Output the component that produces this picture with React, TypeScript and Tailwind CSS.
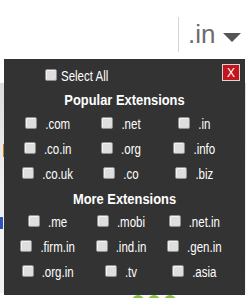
import React from "react";

const popular = [".com", ".net", ".in", ".co.in", ".org", ".info", ".co.uk", ".co", ".biz"];
const more = [".me", ".mobi", ".net.in", ".firm.in", ".ind.in", ".gen.in", ".org.in", ".tv", ".asia"];

// the screenshot uses a narrow face; Liberation Sans at a smaller size, stretched tall, stands in for it
const label = "inline-block text-[11.5px] leading-[16px] text-white scale-y-[1.26] translate-y-[1px]";
const heading = "inline-block text-white font-bold text-[12.9px] leading-[16px] scale-y-[1.17]";

function Box() {
  return (
    <input
      type="checkbox"
      className="appearance-none shrink-0 w-[12px] h-[12px] m-0 rounded-[2px] border border-[#8f8f8f] bg-[#dedede] shadow-[inset_1px_1px_0_#f4f4f4]"
    />
  );
}

function ExtGrid({ items }: { items: string[] }) {
  return (
    <div className="grid grid-cols-3 w-[220px] ml-[7px]">
      {items.map((ext) => (
        <label key={ext} className="flex items-center justify-center gap-[8px] h-[25px]">
          <Box />
          <span className={label}>{ext}</span>
        </label>
      ))}
    </div>
  );
}

export default function App() {
  return (
    <div className="relative w-[246px] h-[298px] bg-white overflow-hidden font-['Liberation_Sans',sans-serif]">
      <div className="flex items-start h-[59px] pl-[178px] pt-[17px]">
        <div className="w-px h-[35px] bg-[#d4d4d4]" />
        <span className="ml-[9px] mt-[4px] text-[26px] leading-[26px] text-[#6d6d6d]">.in</span>
        <svg className="ml-[8px] mt-[16px]" width="18" height="9" viewBox="0 0 18 9">
          <path d="M0 0h18L9 9z" fill="#555" />
        </svg>
      </div>

      <div className="mt-[24px] h-[210px] bg-gradient-to-b from-[#dcdcdc] via-[#f0f0f0] to-[#f2f2f2] pt-[61px]">
        <div className="ml-[3px] w-px h-[13px] bg-[#c87a1e]" />
        <div className="mt-[60px] w-[3px] h-[12px] bg-[#2b55b8]" />
      </div>
      <div className="flex gap-[4px] ml-[132px] mt-[2px]">
        <div className="w-[12px] h-[6px] rounded-t-full bg-[#8bc34a]" />
        <div className="w-[12px] h-[6px] rounded-t-full bg-[#8bc34a]" />
        <div className="w-[12px] h-[6px] rounded-t-full bg-[#8bc34a]" />
      </div>

      <div className="absolute left-[4px] top-[59px] w-[241px] bg-[#333333] pt-[5px] pb-[12px]">
        <div className="flex items-start h-[17px]">
          <label className="flex items-center gap-[4px] ml-[41px] mt-[3px]">
            <Box />
            <span className={label}>Select All</span>
          </label>
          <button className="ml-auto mr-[5px] w-[18px] h-[17px] bg-[#c3161c] border border-[#d6d6d6] text-white text-[12px] leading-[14px] flex items-center justify-center">
            X
          </button>
        </div>
        <div className="mt-[11px] h-[16px] flex justify-center">
          <span className={heading}>Popular Extensions</span>
        </div>
        <div className="mt-[2px]">
          <ExtGrid items={popular} />
        </div>
        <div className="mt-[6px] h-[16px] flex justify-center">
          <span className={heading}>More Extensions</span>
        </div>
        <div className="mt-[1px]">
          <ExtGrid items={more} />
        </div>
      </div>
    </div>
  );
}
